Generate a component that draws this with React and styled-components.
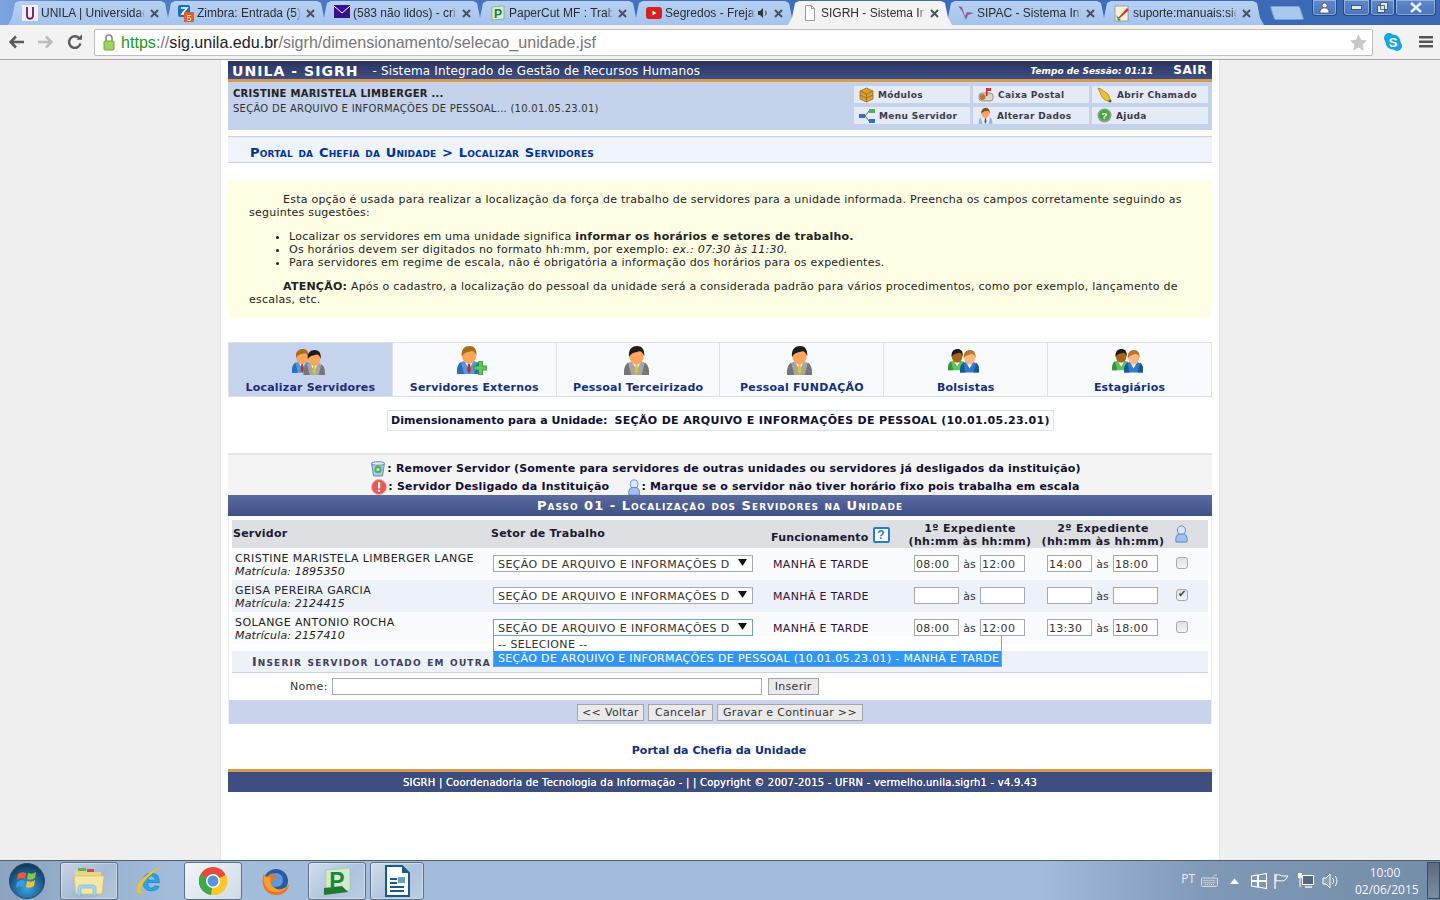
import React from "react";
import styled, { createGlobalStyle } from "styled-components";

const Global = createGlobalStyle`
  html, body { margin: 0; padding: 0; height: 100%; overflow: hidden; background: #f0f0f0; }
  #root { height: 100%; }
  * { box-sizing: border-box; }
`;

const VERDANA = `"DejaVu Sans", Verdana, sans-serif`;
const ARIAL = `"Liberation Sans", Arial, sans-serif`;
const SEGOE = `"Open Sans", "Noto Sans", sans-serif`;

const Screen = styled.div`
  width: 1440px; height: 900px; display: flex; flex-direction: column; overflow: hidden;
  font-family: ${VERDANA}; position: relative;
`;

/* ---------- browser chrome ---------- */
const TabStrip = styled.div`
  height: 25px; flex: none; display: flex; align-items: flex-end; padding-left: 8px;
  background: linear-gradient(90deg, #7fa6df 0, #4f7cc4 5%, #3f6db9 60%, #3a68b4 100%);
  position: relative;
`;
const Tab = styled.div`
  width: 164px; height: 24px; margin-right: -8px; flex: none; display: flex; align-items: center;
  padding: 0 11px 0 14px; gap: 2px;
  clip-path: polygon(0 100%, 4px 70%, 7px 8%, 11px 0, 153px 0, 157px 8%, 160px 70%, 164px 100%);
  background: ${p => (p.$active ? "#f3f3f3" : "linear-gradient(#b6d0f3, #a4c4ee)")};
  z-index: ${p => (p.$active ? 2 : 1)};
`;
const TabIcon = styled.span`
  width: 16px; height: 16px; flex: none; display: flex; margin-right: 1px;
`;
const TabTitle = styled.span`
  flex: 1; min-width: 0; white-space: nowrap; overflow: hidden; font: 12px ${ARIAL}; color: #2c2c2c;
  -webkit-mask-image: linear-gradient(90deg, #000 94%, transparent 100%);
  mask-image: linear-gradient(90deg, #000 94%, transparent 100%);
`;
const TabClose = styled.span`
  flex: none; width: 14px; display: flex; justify-content: center;
`;
const NewTab = styled.div`
  width: 30px; height: 14px; margin: 0 0 5px 16px; background: #a9c8ef; border-radius: 2px;
  transform: skewX(18deg); border: 1px solid #7aa0d8; flex: none;
`;
const WindowButtons = styled.div`
  position: absolute; top: 0; right: 4px; height: 16px; display: flex; gap: 0;
`;
const WindowButton = styled.div`
  width: ${p => p.$w}px; margin-left: ${p => p.$gap || 0}px; height: 16px; border: 1px solid #1f4a8c; border-top: none;
  border-radius: 0 0 4px 4px; background: linear-gradient(#5f88c9, #4a76bb);
  display: flex; align-items: center; justify-content: center;
  box-shadow: inset 0 0 0 1px rgba(255,255,255,.35);
`;
const Toolbar = styled.div`
  height: 35px; flex: none; display: flex; align-items: center; background: #f2f2f2;
  border-bottom: 1px solid #a8a8a8; padding: 0 6px 0 9px; position: relative; z-index: 3;
`;
const NavIcons = styled.div`
  width: 85px; display: flex; gap: 14px; align-items: center; flex: none;
`;
const Omnibox = styled.div`
  width: 1279px; height: 27px; background: #fff; border: 1px solid #bdbdbd; border-radius: 2px; flex: none;
  display: flex; align-items: center; padding: 0 5px 0 8px; font: 16.1px ${ARIAL}; white-space: nowrap;
`;
const Url = styled.span`
  flex: 1; margin-left: 6px; color: #777;
  b { font-weight: normal; color: #1a9a1a; } i { font-style: normal; color: #222; }
`;
const ToolbarEnd = styled.div`
  display: flex; align-items: center; gap: 17px; margin-left: 11px;
`;

/* ---------- page ---------- */
const Viewport = styled.div`
  flex: 1; min-height: 0; background: #efefef; display: flex; justify-content: center; overflow: hidden;
`;
const Sheet = styled.div`
  width: 1000px; background: #fff; padding: 1px 7px 0; border-left: 1px solid #e4e4e4; border-right: 1px solid #e4e4e4;
  color: #222; font-size: 11px;
`;
const TitleBar = styled.div`
  height: 21px; border-bottom: 3px solid #d99a4d; display: flex; align-items: center; padding: 2px 5px 0 4px;
  background: linear-gradient(#29335c, #3f4f85); color: #fff;
`;
const AppName = styled.span`
  font: bold 14px ${VERDANA}; letter-spacing: 1.05px; white-space: nowrap;
`;
const AppLong = styled.span`
  flex: 1; margin-left: 14px; font-size: 12px; letter-spacing: .14px; white-space: nowrap;
`;
const Session = styled.span`
  font: italic bold 9px ${VERDANA}; margin-right: 20px; margin-top: -1px;
`;
const Leave = styled.span`
  font: bold 12px ${VERDANA}; letter-spacing: .5px; margin-top: -2px;
`;
const InfoPanel = styled.div`
  height: 48px; background: #c4d2eb; display: flex; justify-content: space-between; padding: 4px 4px 0 5px;
`;
const UserInfo = styled.div`
  font-size: 10px; line-height: 15px; letter-spacing: .26px; color: #333;
  strong { display: block; color: #222; letter-spacing: .25px; }
`;
const ShortcutGrid = styled.div`
  display: grid; grid-template-columns: repeat(3, 116px); grid-auto-rows: 17px; gap: 4px 3px; width: 354px;
`;
const Shortcut = styled.div`
  background: #e4eaf6; display: flex; align-items: center; gap: 4px; padding-left: 5px;
  font: bold 9px ${VERDANA}; color: #3b3b48; letter-spacing: .33px; white-space: nowrap;
`;
const Breadcrumb = styled.div`
  height: 27px; margin-top: 6px; background: #eff3fc; border-top: 1px solid #c4d2eb; border-bottom: 1px solid #c4d2eb;
  box-shadow: inset 0 1px 0 #f3efe0;
  padding: 8px 0 0 22px; font: bold 13px/15px ${VERDANA}; font-variant: small-caps; color: #003395; white-space: nowrap;
  word-spacing: 1px; letter-spacing: .16px;
`;
const Help = styled.div`
  margin-top: 17px; height: 138px; background: #ffffe5; padding: 13px 25px 0 21px; line-height: 13px; color: #222;
  letter-spacing: .24px;
  p { margin: 0; text-indent: 34px; }
  ul { margin: 11px 0 11px; padding-left: 40px; }
`;
const TabRow = styled.div`
  margin-top: 24px; height: 55px; display: grid; grid-template-columns: repeat(6, 1fr);
  border: 1px solid #dfe1e8; border-width: 1px 1px 1px 0;
`;
const PortalTab = styled.div`
  display: flex; flex-direction: column; align-items: center; padding-top: 3px;
  background: ${p => (p.$active ? "#c6d3ec" : "#f9fafd")}; border-left: 1px solid #dfe1e8;
  font-weight: bold; font-size: 11px; letter-spacing: .2px; color: ${p => (p.$active ? "#1d2a78" : "#12307e")};
`;
const PortalIcon = styled.div`
  height: 29px; margin-bottom: 6px; padding-right: 4px; display: flex; align-items: center; justify-content: center;
`;
const UnitRow = styled.div`
  display: flex; justify-content: center; margin-top: 13px;
`;
const UnitBox = styled.div`
  height: 21px; width: 667px; margin-left: 1px; border: 1px solid #e0e2e8; background: #fbfcfe; padding: 3px 0 0 3px;
  font-weight: bold; font-size: 11px; letter-spacing: .05px; color: #101030; white-space: nowrap;
  span { margin-left: 3px; letter-spacing: .34px; }
`;
const Legend = styled.div`
  margin-top: 22px; height: 42px; border-top: 2px solid #e6e6e6; background: #f4f4f4;
  display: flex; flex-direction: column; align-items: center; padding: 5px 0 0 11px;
  font-weight: bold; font-size: 11px; letter-spacing: .17px; color: #101030; line-height: 18px; overflow: hidden;
`;
const LegendLine = styled.div`
  display: flex; align-items: center; white-space: nowrap; height: 18px; flex: none;
  svg { flex: none; margin-right: 1px; }
  em { font-style: normal; margin-left: 19px; display: inline-flex; align-items: center; }
`;
const SectionBar = styled.div`
  height: 21px; background: linear-gradient(#5a6b9f, #3f4f88); color: #fff; text-align: center;
  font: bold 13px/21px ${VERDANA}; font-variant: small-caps; letter-spacing: 1px; white-space: nowrap;
`;
const Form = styled.div`
  padding: 4px 3px 0; position: relative;
  border-left: 1px solid #eee; border-right: 1px solid #eee;
`;
const GRID = "259px 280px 137px 133px 133px 34px";
const HeadRow = styled.div`
  display: grid; grid-template-columns: ${GRID}; height: 28px; background: #dedfe3;
  font-weight: bold; font-size: 11px; letter-spacing: .22px; color: #1a1a30;
`;
const HeadCell = styled.div`
  display: flex; align-items: flex-end; padding: 0 0 8px ${p => (p.$flush ? 0 : 1)}px; white-space: nowrap;
`;
const FuncCell = styled(HeadCell)`
  padding-bottom: 4px; letter-spacing: .17px;
`;
const StackCell = styled.div`
  display: flex; flex-direction: column; align-items: center; text-align: center; line-height: 13px;
  padding: 2px 9px 0 0; letter-spacing: .32px; white-space: nowrap;
`;
const IconCell = styled.div`
  display: flex; align-items: center; padding: 0 0 0 1px;
`;
const HelpMark = styled.span`
  width: 17px; height: 16px; margin: 0 0 1px 4px; border: 2px solid #1f7fd0; border-radius: 2px; background: #fff;
  color: #1f7fd0; font: bold 12px/13px ${ARIAL}; text-align: center; align-self: flex-end; letter-spacing: 0;
`;
const Row = styled.div`
  display: grid; grid-template-columns: ${GRID}; height: 32px; background: ${p => (p.$alt ? "#edf1f8" : "#fafbfd")};
  align-items: start;
`;
const NameCell = styled.div`
  padding: 4px 0 0 3px; line-height: 13px; font-size: 11px; letter-spacing: .4px; color: #222;
  white-space: nowrap; i { display: block; letter-spacing: .15px; }
`;
const SelectCell = styled.div`
  padding: 7px 0 0 2px;
`;
const FakeSelect = styled.div`
  width: 260px; height: 17px; border: 1px solid ${p => (p.$focus ? "#6e9fe0" : "#a9a9a9")}; background: #fff; display: flex;
  align-items: center; justify-content: space-between; padding: 1px 5px 0 4px; font-size: 11px; letter-spacing: .42px; white-space: nowrap;
  overflow: hidden; color: #333;
  span { overflow: hidden; }
  svg { flex: none; margin: -3px 0 0 7px; }
`;
const Shift = styled.div`
  padding: 10px 0 0 2px; font-size: 11px; letter-spacing: .34px; color: #331133; white-space: nowrap;
`;
const TimeCell = styled.div`
  display: flex; align-items: center; padding: 7px 0 0 6px; font-size: 11px; color: #333;
  span { width: 21px; text-align: center; padding-top: 1px; }
`;
const TimeInput = styled.input`
  width: 45px; height: 17px; border: 1px solid #a9a9a9; background: #fff; padding: 1px 1px 0; font: 11px ${VERDANA};
  letter-spacing: .3px; color: #333; outline: none;
`;
const CheckCell = styled.div`
  display: flex; padding: 9px 0 0 2px;
`;
const Check = styled.input`
  appearance: none; margin: 0; width: 12px; height: 12px; border: 1px solid #a9a9a9; border-radius: 3px;
  background: linear-gradient(#e2e2e2, #f4f4f4); position: relative;
  &:checked::after { content: "✔"; position: absolute; left: 1px; top: -2px; font: 10px ${VERDANA}; color: #444; }
`;
const Dropdown = styled.div`
  position: absolute; left: 264px; top: 120px; width: 509px; border: 1px solid #6e9fe0; border-top: none; background: #fff;
  z-index: 5; font-size: 11px; letter-spacing: .33px; line-height: 14px; color: #333; white-space: nowrap; overflow: hidden;
`;
const Option = styled.div`
  height: 15px; padding: ${p => (p.$sel ? 1 : 2)}px 0 0 4px;
  background: ${p => (p.$sel ? "#3097f8" : "#fff")}; color: ${p => (p.$sel ? "#fff" : "#333")};
`;
const SubTitle = styled.div`
  margin-top: 7px; height: 22px; background: #edf1f8; border-bottom: 1px solid #c4d2eb;
  padding: 4px 0 0 20px; font: bold 12.5px/14px ${VERDANA}; font-variant: small-caps; color: #40405a; letter-spacing: 1.15px; white-space: nowrap;
`;
const NameRow = styled.div`
  height: 27px; display: flex; align-items: center; padding: 0 0 1px 58px; font-size: 11px; letter-spacing: .3px; color: #333;
`;
const NameInput = styled.input`
  width: 430px; height: 17px; margin: 0 6px 0 4px; border: 1px solid #a9a9a9; background: #fff; outline: none;
`;
const GreyButton = styled.div`
  display: inline-flex; align-items: center; height: 17px; padding: 0 ${p => p.$pad || 6}px; border: 1px solid #a5a5a5; background: #eaeaea;
  font-size: 11px; letter-spacing: .32px; color: #333; white-space: nowrap;
`;
const FormFooter = styled.div`
  height: 24px; margin: 0 -3px; background: #c8d4eb; display: flex; justify-content: center; align-items: center; gap: 4px;
`;
const ReturnLink = styled.div`
  margin-top: 20px; text-align: center; font-weight: bold; font-size: 11px; letter-spacing: .02px; color: #12307e; height: 25px; margin-left: -2px;
`;
const PageFoot = styled.div`
  height: 23px; border-top: 3px solid #d99a4d; background: #3d4d80; color: #fff; text-align: center;
  font-size: 10px; line-height: 22px; white-space: nowrap; letter-spacing: .22px; text-shadow: 0 0 .6px #fff;
`;

/* ---------- taskbar ---------- */
const Taskbar = styled.div`
  height: 40px; flex: none; position: relative; display: flex; align-items: center; padding-left: 5px;
  border-top: 1px solid #4e5d70;
  background: linear-gradient(90deg, #8ba3bf 0, #a3bcd9 12%, #a3bcd9 72%, #7f98b5 84%, #748da9 100%);
`;
const TaskItem = styled.div`
  width: ${p => p.$w}px; height: 38px; margin-left: ${p => p.$m || 0}px; flex: none; display: flex; align-items: center; justify-content: center;
  ${p => p.$open && `border: 1px solid #5f7185; border-radius: 3px; background: linear-gradient(135deg, rgba(255,255,255,.5), rgba(255,255,255,.12) 55%, rgba(255,255,255,.25)); box-shadow: inset 0 0 0 1px rgba(255,255,255,.35);`}
  ${p => p.$active && `background: linear-gradient(135deg, #f2f5f9, #cfdbe8); border: 1px solid #5f7185; border-radius: 3px;`}
`;
const Tray = styled.div`
  position: absolute; right: 0; top: 0; bottom: 0; display: flex; align-items: center; color: #fff;
`;
const TrayLang = styled.span`
  font: 12px ${SEGOE}; margin-right: 6px; margin-top: -5px; color: #e8eef5;
`;
const TrayIcons = styled.div`
  display: flex; align-items: center; gap: 7px; margin-right: 16px;
`;
const TraySpaced = styled.span`
  display: flex; margin: 0 5px;
`;
const Clock = styled.div`
  width: 60px; text-align: center; font: 12px/17px ${SEGOE}; color: #f4f7fa; margin-right: 12px; margin-top: 1px;
`;
const ShowDesktop = styled.div`
  width: 13px; height: 37px; background: linear-gradient(#5a6b7f, #7b8da3); border: 1px solid #3b4a5c;
`;

/* ---------- drawings ---------- */
const Head = ({ x = 0, y = 0, s = 1, suit, dark, shirt = "#fff", tie, hair, skin = "#ffa45c" }) => (
  <g transform={`translate(${x} ${y}) scale(${s})`}>
    <path d="M0 28c-.5-7 2-11.500 7-13h10c5 1.500 7.500 6 7 13z" fill={suit} />
    <path d="M0 28c-.5-6 1-10 4-12l3 12z" fill={dark} />
    <path d="M24 28c.5-6-1-10-4-12l-3 12z" fill={dark} />
    <path d="M8 16l4 7 4-7z" fill={shirt} />
    {tie && <path d="M11 17.500h2l.8 7-1.800 3.500-1.800-3.500z" fill={tie} />}
    <ellipse cx="12" cy="9.500" rx="7" ry="8.500" fill={skin} />
    <path d="M4.800 10.500C3.800 3 8 0 12.500 0s7.500 3 7 10c-1-3-2.500-5-4.500-5-3 1-8 1-10.200 5.500z" fill={hair} />
  </g>
);
const G = { suit: "#a6a6a6", dark: "#767676", hair: "#1c1c1c", tie: "#e6c21e" };
const B = { suit: "#4d9be0", dark: "#2b6fb8", hair: "#a96c17", tie: "#d8232a" };
const Pair = () => (
  <svg width="33" height="29" viewBox="0 0 33 29">
    <Head x={0} y={3} s={0.85} {...B} />
    <Head x={11.500} y={4} s={0.89} {...G} />
  </svg>
);
const Plus = () => (
  <svg width="30" height="29" viewBox="0 0 30 29">
    <Head x={0} y={0} s={1} {...B} />
    <path d="M17 20h4.500v-4.500h4V20H30v4h-4.500v5h-4v-5H17z" fill="#5ec95a" stroke="#2c8a35" strokeWidth=".8" />
  </svg>
);
const Single = () => (
  <svg width="27" height="29" viewBox="0 0 24 28">
    <Head x={0} y={0} s={1} {...G} />
  </svg>
);
const Team = () => (
  <svg width="31" height="25" viewBox="0 0 31 25">
    <Head x={0} y={1} s={0.76} suit="#5ec45a" dark="#35963c" hair="#1c1c1c" skin="#a8641c" />
    <Head x={12} y={2} s={0.8} suit="#2e7cc8" dark="#1d5696" hair="#b47a25" skin="#ffb680" shirt="#eef" />
  </svg>
);
const BlueFigure = ({ h = 17 }) => (
  <svg width={h * 0.72} height={h} viewBox="0 0 14 20">
    <ellipse cx="7" cy="6" rx="4.500" ry="5" fill="#dbe8fb" stroke="#4f7ec8" />
    <path d="M1 19c-1-4 0-8 3-9h6c3 1 4 5 3 9z" fill="#9fc0f0" stroke="#4f7ec8" />
  </svg>
);
const Trash = () => (
  <svg width="16" height="16" viewBox="0 0 16 16">
    <path d="M1.500 2h13l-2 13h-9z" fill="#a8c8e0" stroke="#6a90b0" />
    <ellipse cx="8" cy="2.500" rx="6.500" ry="1.800" fill="#dcebf6" stroke="#6a90b0" />
    <circle cx="8" cy="8.500" r="3.500" fill="#3cb54a" /><circle cx="8" cy="8.500" r="1.500" fill="#e8fbe8" />
  </svg>
);
const Alert = () => (
  <svg width="16" height="16" viewBox="0 0 16 16">
    <circle cx="8" cy="8" r="7.500" fill="#e85a50" stroke="#f0a8a0" />
    <rect x="7" y="3" width="2.200" height="6.500" rx="1" fill="#fff" /><circle cx="8.100" cy="11.800" r="1.300" fill="#fff" />
  </svg>
);
const ArrowDown = () => (
  <svg width="9" height="7" viewBox="0 0 9 7"><path d="M0 0h9L4.500 7z" fill="#111" /></svg>
);
const CloseX = () => (
  <svg width="9" height="9" viewBox="0 0 9 9"><path d="M1 1l7 7M8 1L1 8" stroke="#4a505e" strokeWidth="2" /></svg>
);
const Box3D = () => (
  <svg width="15" height="16" viewBox="0 0 15 16">
    <path d="M1 4l6.500-3L14 4v8l-6.500 3L1 12z" fill="#d9a22e" stroke="#8a6414" strokeWidth=".7" />
    <path d="M1 4l6.500 3L14 4M7.500 7v8M1 8l6.500 3L14 8" fill="none" stroke="#8a6414" strokeWidth=".7" />
  </svg>
);
const Mailbox = () => (
  <svg width="16" height="16" viewBox="0 0 16 16">
    <rect x="1" y="6" width="14" height="8" rx="3" fill="#d8d4c8" stroke="#777" strokeWidth=".7" />
    <circle cx="4.500" cy="10" r="3" fill="#b5793a" />
    <rect x="8" y="1" width="1.500" height="8" fill="#c22" /><path d="M9 1h4v3H9z" fill="#e33" />
  </svg>
);
const Bell = () => (
  <svg width="16" height="16" viewBox="0 0 16 16">
    <path d="M1 1l3 1 7 5 3 7c-3 1-7-1-9-4z" fill="#f0c02a" stroke="#8a6a10" strokeWidth=".6" />
    <circle cx="13" cy="14" r="1.500" fill="#7a5c10" />
  </svg>
);
const Net = () => (
  <svg width="16" height="14" viewBox="0 0 16 14">
    <rect x="0" y="5" width="6" height="4" fill="#3a6fc0" /><rect x="10" y="0" width="6" height="4" fill="#53b04f" /><rect x="10" y="10" width="6" height="4" fill="#3a6fc0" />
    <path d="M6 7l4-5M6 7l4 5" stroke="#567" strokeWidth="1" fill="none" />
  </svg>
);
const MiniPerson = () => (
  <svg width="15" height="16" viewBox="0 0 24 28"><Head x={0} y={0} s={1} suit="#e8eefc" dark="#9fb4dc" hair="#7b4e1c" tie="#3a56b0" /></svg>
);
const Question = () => (
  <svg width="15" height="15" viewBox="0 0 15 15">
    <circle cx="7.500" cy="7.500" r="7" fill="#9a9a9a" /><circle cx="7.500" cy="7" r="5.500" fill="#3fae3a" />
    <text x="7.500" y="10.500" textAnchor="middle" fontSize="9.500" fontWeight="700" fontFamily="Liberation Sans" fill="#fff">?</text>
  </svg>
);

/* favicons */
const FavU = () => (
  <svg width="16" height="16" viewBox="0 0 16 16"><rect width="16" height="16" fill="#f3eef2" />
    <path d="M5 2v8c0 5 6 5 6 0V2" fill="none" stroke="#5a1a6a" strokeWidth="1.800" /></svg>
);
const FavZ = () => (
  <svg width="16" height="17" viewBox="0 0 16 17"><rect width="12" height="12" rx="2" fill="#1673b8" />
    <path d="M3 3h6L4 9h5" fill="none" stroke="#fff" strokeWidth="1.600" />
    <rect x="6" y="7" width="10" height="10" rx="1" fill="#ef5a1a" />
    <text x="11" y="15.500" textAnchor="middle" fontSize="9" fill="#fff" fontFamily="Liberation Sans">5</text></svg>
);
const FavMail = () => (
  <svg width="16" height="14" viewBox="0 0 16 14"><rect width="16" height="13" fill="#3a0f8f" /><path d="M0 1l8 7 8-7" fill="none" stroke="#fff" strokeWidth="1" /></svg>
);
const FavP = () => (
  <svg width="16" height="16" viewBox="0 0 16 16"><path d="M2 2l12-1v13L2 15z" fill="#d8ecd4" stroke="#7aa87a" strokeWidth=".7" />
    <text x="8" y="13" textAnchor="middle" fontSize="12" fontWeight="700" fill="#1f7a30" fontFamily="Liberation Sans">P</text></svg>
);
const FavYT = () => (
  <svg width="16" height="16" viewBox="0 0 16 16"><rect y="2" width="16" height="12" rx="3" fill="#d9201f" /><path d="M6.500 5.500l4 2.500-4 2.500z" fill="#fff" /></svg>
);
const FavPage = () => (
  <svg width="16" height="16" viewBox="0 0 16 16"><path d="M3.500.500h6l3 3v12h-9zM9.500.500v3h3" fill="#fff" stroke="#9a9a9a" /></svg>
);
const FavSipac = () => (
  <svg width="16" height="16" viewBox="0 0 16 16"><path d="M0 1l4 1 3 9 2-4 7 1-6 2-2 5-4-9z" fill="#9a5a90" /></svg>
);
const FavNote = () => (
  <svg width="16" height="17" viewBox="0 0 16 17"><rect x="1" y="1" width="13" height="15" fill="#f4f0dc" stroke="#888" strokeWidth=".7" />
    <path d="M4 13l9-10 2 2-9 8z" fill="#c8402a" /><path d="M2 10l5 5-3 1z" fill="#3aa04a" /></svg>
);
const SpeakerSmall = () => (
  <svg width="12" height="12" viewBox="0 0 12 12"><path d="M1 4h2l3-3v10L3 8H1z" fill="#333" /><path d="M8 3.500c1.500 1.500 1.500 3.500 0 5" stroke="#333" fill="none" /></svg>
);

const Back = () => (
  <svg width="15" height="14" viewBox="0 0 15 14"><path d="M7 1.500L1.500 7 7 12.500M2 7h13" fill="none" stroke="#5a5a5a" strokeWidth="2.600" /></svg>
);
const Forward = () => (
  <svg width="15" height="14" viewBox="0 0 15 14"><path d="M8 1.500L13.500 7 8 12.500M13 7H0" fill="none" stroke="#bcbcbc" strokeWidth="2.600" /></svg>
);
const Reload = () => (
  <svg width="16" height="16" viewBox="0 0 16 16"><path d="M13.500 9.500A5.800 5.800 0 1 1 12 4" fill="none" stroke="#5a5a5a" strokeWidth="2.400" /><path d="M9.500 5.800H15V.300z" fill="#5a5a5a" /></svg>
);
const Lock = () => (
  <svg width="12" height="17" viewBox="0 0 12 17"><path d="M3 7V4a3 3 0 0 1 6 0v3" fill="none" stroke="#888" strokeWidth="1.600" /><rect x="1" y="7" width="10" height="9" rx="1" fill="#9ed35f" stroke="#6da838" /></svg>
);
const Star = () => (
  <svg width="17" height="17" viewBox="0 0 17 17"><path d="M8.500 0l2.600 5.800 6 .7-4.500 4 1.300 6.200-5.400-3.100-5.400 3.100 1.300-6.200L0 6.500l6-.7z" fill="#c8c8c8" /></svg>
);
const Skype = () => (
  <svg width="18" height="18" viewBox="0 0 18 18"><circle cx="5" cy="5" r="5" fill="#12a5e8" /><circle cx="13" cy="13" r="5" fill="#12a5e8" /><circle cx="9" cy="9" r="7.500" fill="#12a5e8" />
    <text x="9" y="13.500" textAnchor="middle" fontSize="13" fontWeight="700" fill="#fff" fontFamily="Liberation Sans">S</text></svg>
);
const Menu = () => (
  <svg width="14" height="12" viewBox="0 0 14 12"><path d="M0 0h14v2.500H0zM0 4.500h14V7H0zM0 9h14v2.500H0z" fill="#555" /></svg>
);

/* taskbar icons */
const Orb = () => (
  <svg width="38" height="38" viewBox="0 0 38 38">
    <defs><radialGradient id="orb" cx=".5" cy=".7" r=".7"><stop offset="0" stopColor="#3aa4e6" /><stop offset="1" stopColor="#0c3558" /></radialGradient></defs>
    <circle cx="19" cy="19" r="17.500" fill="url(#orb)" stroke="#30465e" />
    <path d="M10 12c3-2 5-2 8-1l-1 6c-3-1-5-1-8 1z" fill="#ef5a30" /><path d="M20 11c3 1 5 1 8-1l-1 6c-3 2-5 2-8 1z" fill="#8cc63f" />
    <path d="M9 20c3-2 5-2 8-1l-1 6c-3-1-5-1-8 1z" fill="#2ea3e0" /><path d="M19 19c3 1 5 1 8-1l-1 6c-3 2-5 2-8 1z" fill="#fbc02d" />
  </svg>
);
const Folder = () => (
  <svg width="32" height="32" viewBox="0 0 32 32">
    <path d="M2 5h10l2 2h14v6H2z" fill="#e6d58a" /><rect x="5" y="3" width="8" height="3" fill="#5ab552" /><rect x="14" y="4" width="7" height="3" fill="#d9483a" />
    <path d="M1 11h30l-2 18H3z" fill="#f7e7a4" stroke="#d0b860" strokeWidth=".6" />
    <path d="M5 31v-8c0-2 1-3 3-3h12c2 0 3 1 3 3v8h-3v-8H8v8z" fill="#a0d8f5" stroke="#6ab0dc" strokeWidth=".6" />
  </svg>
);
const IE = () => (
  <svg width="32" height="32" viewBox="0 0 32 32">
    <text x="16" y="26" textAnchor="middle" fontSize="34" fontWeight="700" fontFamily="Liberation Sans" fill="#27a4e8" stroke="#1a7ec0" strokeWidth=".5">e</text>
    <path d="M2 27C0 19 14 4 29 2c-6 1-20 11-24 23 0 2 2 3 6 1-4 3-8 3-9 1z" fill="#f7c31c" />
  </svg>
);
const ChromeIcon = () => (
  <svg width="30" height="30" viewBox="0 0 30 30">
    <circle cx="15" cy="15" r="14" fill="#e84a3c" />
    <path d="M15 15L2.500 8.500A14 14 0 0 0 13 28.900z" fill="#3daa4a" />
    <path d="M15 15L28 9A14 14 0 0 1 13 28.900z" fill="#fbc926" />
    <circle cx="15" cy="15" r="7" fill="#fff" /><circle cx="15" cy="15" r="5.500" fill="#5b93dc" />
  </svg>
);
const Firefox = () => (
  <svg width="30" height="30" viewBox="0 0 30 30">
    <circle cx="16" cy="15" r="12" fill="#2c5a9e" /><circle cx="16" cy="14" r="7" fill="#5e9ad8" />
    <path d="M4 8c-4 10 1 20 11 21 8 1 14-5 14-11-2 4-6 7-11 6-6-1-8-7-5-10 1-1 3-1 4-3-3 0-5-2-4-4-4 1-6 3-7 5z" fill="#e8742a" />
    <path d="M4 10C2 18 8 26 16 26c5 0 9-2 11-6-3 3-7 4-10 3-6-2-8-8-6-11z" fill="#f6a02e" />
  </svg>
);
const PaperCutBig = () => (
  <svg width="30" height="30" viewBox="0 0 30 30">
    <path d="M4 4l24-2v22L4 28z" fill="#d4ebd0" stroke="#9abf9a" strokeWidth=".6" />
    <path d="M2 22l18-2 6 6-24 3z" fill="#1f7a30" />
    <text x="15" y="23" textAnchor="middle" fontSize="23" fontWeight="700" fontFamily="Liberation Sans" fill="#178a38">P</text>
  </svg>
);
const WriterDoc = () => (
  <svg width="28" height="32" viewBox="0 0 28 32">
    <path d="M3 1h16l7 7v23H3z" fill="#fff" stroke="#1a5a8a" strokeWidth="2" /><path d="M19 1v7h7z" fill="#1a5a8a" />
    <path d="M7 14h7M7 18h7M7 22h14M7 26h14" stroke="#1a5a8a" strokeWidth="1.800" /><rect x="15" y="12" width="7" height="6" fill="#6a9cc4" />
  </svg>
);
const Keyboard = () => (
  <svg width="17" height="13" viewBox="0 0 17 13"><path d="M12 3c1-2 2-2 4-2" fill="none" stroke="#c8d2dc" /><rect x=".5" y="4" width="16" height="8.500" rx="1" fill="#8f9fb0" stroke="#d4dbe3" /><path d="M2.500 6.500h12M2.500 8.500h12M4 10.500h9" stroke="#dfe6ec" strokeDasharray="1 1" /></svg>
);
const TrayArrow = () => (
  <svg width="9" height="6" viewBox="0 0 9 6"><path d="M0 6l4.500-5.500L9 6z" fill="#fff" /></svg>
);
const WinFlag = () => (
  <svg width="16" height="16" viewBox="0 0 16 16"><path d="M.5 3l6-1v5.500h-6zM7.500 2l8-1.500v7h-8zM.5 8.500h6V14l-6-1zM7.500 8.500h8V15.500l-8-1.500z" fill="none" stroke="#fff" strokeWidth="1.100" /></svg>
);
const ActionFlag = () => (
  <svg width="16" height="16" viewBox="0 0 16 16"><path d="M1 1v15" stroke="#fff" strokeWidth="1.300" /><path d="M2 2c3-1 5 1 7 1h5l-3 4c-2 2-5 0-9 1z" fill="#7a8fa6" stroke="#fff" /></svg>
);
const Network = () => (
  <svg width="18" height="17" viewBox="0 0 18 17"><rect x="5.500" y="3.500" width="11" height="9" fill="#54677c" stroke="#fff" /><path d="M8 15h7" stroke="#fff" strokeWidth="1.300" /><rect x="1" y="1" width="4" height="5" fill="#fff" /><path d="M3 6v9" stroke="#fff" /></svg>
);
const Volume = () => (
  <svg width="17" height="16" viewBox="0 0 17 16"><path d="M1 5h3l4-4v14l-4-4H1z" fill="#8ea0b4" stroke="#fff" /><path d="M10.500 5c1.500 2 1.500 4 0 6M13 3c2.500 3 2.500 7 0 10" fill="none" stroke="#fff" /></svg>
);

const tabs = [
  { icon: <FavU />, title: "UNILA | Universidade Federal" },
  { icon: <FavZ />, title: "Zimbra: Entrada (5)" },
  { icon: <FavMail />, title: "(583 não lidos) - cristine" },
  { icon: <FavP />, title: "PaperCut MF : Trabalhos" },
  { icon: <FavYT />, title: "Segredos - Frejat", sound: true },
  { icon: <FavPage />, title: "SIGRH - Sistema Integrado", active: true },
  { icon: <FavSipac />, title: "SIPAC - Sistema Integrado" },
  { icon: <FavNote />, title: "suporte:manuais:sigrh" },
];
const shortcuts = [
  [<Box3D />, "Módulos"], [<Mailbox />, "Caixa Postal"], [<Bell />, "Abrir Chamado"],
  [<Net />, "Menu Servidor"], [<MiniPerson />, "Alterar Dados"], [<Question />, "Ajuda"],
];
const portalTabs = [
  [<Pair />, "Localizar Servidores", true], [<Plus />, "Servidores Externos"], [<Single />, "Pessoal Terceirizado"],
  [<Single />, "Pessoal FUNDAÇÃO"], [<Team />, "Bolsistas"], [<Team />, "Estagiários"],
];
const SECTOR = "SEÇÃO DE ARQUIVO E INFORMAÇÕES DE PESSOAL (10.01.05.23.01) - MANHÃ E TARDE";
const people = [
  { name: "CRISTINE MARISTELA LIMBERGER LANGE", id: "1895350", t: ["08:00", "12:00", "14:00", "18:00"] },
  { name: "GEISA PEREIRA GARCIA", id: "2124415", t: ["", "", "", ""], checked: true, alt: true },
  { name: "SOLANGE ANTONIO ROCHA", id: "2157410", t: ["08:00", "12:00", "13:30", "18:00"], focus: true },
];

export default function App() {
  return (
    <Screen>
      <Global />
      <TabStrip>
        {tabs.map(t => (
          <Tab key={t.title} $active={t.active}>
            <TabIcon>{t.icon}</TabIcon>
            <TabTitle>{t.title}</TabTitle>
            {t.sound && <SpeakerSmall />}
            <TabClose><CloseX /></TabClose>
          </Tab>
        ))}
        <NewTab />
        <WindowButtons>
          <WindowButton $w={25}>
            <svg width="11" height="12" viewBox="0 0 11 12"><circle cx="5.500" cy="3.500" r="2.500" fill="#fff" stroke="#234" strokeWidth=".6" /><path d="M1 11c0-4 2-5 4.500-5S10 7 10 11z" fill="#fff" stroke="#234" strokeWidth=".6" /></svg>
          </WindowButton>
          <WindowButton $w={27} $gap={6}>
            <svg width="11" height="5" viewBox="0 0 11 5"><rect x=".5" y=".5" width="10" height="4" fill="#dfe8f5" stroke="#234" strokeWidth=".7" /></svg>
          </WindowButton>
          <WindowButton $w={25}>
            <svg width="11" height="11" viewBox="0 0 11 11"><path d="M3.500.500h7v7h-7zM.5 3.500h7v7h-7z" fill="#dfe8f5" stroke="#234" strokeWidth=".7" /></svg>
          </WindowButton>
          <WindowButton $w={41}>
            <svg width="12" height="11" viewBox="0 0 12 11"><path d="M1 1l10 9M11 1L1 10" stroke="#e8eef8" strokeWidth="2.400" /></svg>
          </WindowButton>
        </WindowButtons>
      </TabStrip>
      <Toolbar>
        <NavIcons>
          <Back /><Forward /><Reload />
        </NavIcons>
        <Omnibox>
          <Lock />
          <Url><b>https</b>://<i>sig.unila.edu.br</i>/sigrh/dimensionamento/selecao_unidade.jsf</Url>
          <Star />
        </Omnibox>
        <ToolbarEnd><Skype /><Menu /></ToolbarEnd>
      </Toolbar>

      <Viewport>
        <Sheet>
          <TitleBar>
            <AppName>UNILA - SIGRH</AppName>
            <AppLong>- Sistema Integrado de Gestão de Recursos Humanos</AppLong>
            <Session>Tempo de Sessão: 01:11</Session>
            <Leave>SAIR</Leave>
          </TitleBar>
          <InfoPanel>
            <UserInfo>
              <strong>CRISTINE MARISTELA LIMBERGER ...</strong>
              SEÇÃO DE ARQUIVO E INFORMAÇÕES DE PESSOAL... (10.01.05.23.01)
            </UserInfo>
            <ShortcutGrid>
              {shortcuts.map(([icon, label]) => (
                <Shortcut key={label}>{icon}{label}</Shortcut>
              ))}
            </ShortcutGrid>
          </InfoPanel>
          <Breadcrumb>Portal da Chefia da Unidade &gt; Localizar Servidores</Breadcrumb>
          <Help>
            <p>Esta opção é usada para realizar a localização da força de trabalho de servidores para a unidade informada. Preencha os campos corretamente seguindo as seguintes sugestões:</p>
            <ul>
              <li>Localizar os servidores em uma unidade significa <b>informar os horários e setores de trabalho.</b></li>
              <li>Os horários devem ser digitados no formato hh:mm, por exemplo: <i>ex.: 07:30 às 11:30.</i></li>
              <li>Para servidores em regime de escala, não é obrigatória a informação dos horários para os expedientes.</li>
            </ul>
            <p><b>ATENÇÃO:</b> Após o cadastro, a localização do pessoal da unidade será a considerada padrão para vários procedimentos, como por exemplo, lançamento de escalas, etc.</p>
          </Help>
          <TabRow>
            {portalTabs.map(([icon, label, active]) => (
              <PortalTab key={label} $active={active}><PortalIcon>{icon}</PortalIcon>{label}</PortalTab>
            ))}
          </TabRow>
          <UnitRow>
            <UnitBox>Dimensionamento para a Unidade: <span>SEÇÃO DE ARQUIVO E INFORMAÇÕES DE PESSOAL (10.01.05.23.01)</span></UnitBox>
          </UnitRow>
          <Legend>
            <LegendLine><Trash />: Remover Servidor (Somente para servidores de outras unidades ou servidores já desligados da instituição)</LegendLine>
            <LegendLine>
              <Alert />: Servidor Desligado da Instituição
              <em><BlueFigure />: Marque se o servidor não tiver horário fixo pois trabalha em escala</em>
            </LegendLine>
          </Legend>
          <SectionBar>Passo 01 - Localização dos Servidores na Unidade</SectionBar>
          <Form>
            <HeadRow>
              <HeadCell>Servidor</HeadCell>
              <HeadCell $flush>Setor de Trabalho</HeadCell>
              <FuncCell $flush>Funcionamento<HelpMark>?</HelpMark></FuncCell>
              <StackCell><span>1º Expediente</span><span>(hh:mm às hh:mm)</span></StackCell>
              <StackCell><span>2º Expediente</span><span>(hh:mm às hh:mm)</span></StackCell>
              <IconCell><BlueFigure h={18} /></IconCell>
            </HeadRow>
            {people.map(p => (
              <Row key={p.id} $alt={p.alt}>
                <NameCell>{p.name}<i>Matrícula: {p.id}</i></NameCell>
                <SelectCell>
                  <FakeSelect $focus={p.focus}><span>SEÇÃO DE ARQUIVO E INFORMAÇÕES D</span><ArrowDown /></FakeSelect>
                </SelectCell>
                <Shift>MANHÃ E TARDE</Shift>
                <TimeCell><TimeInput readOnly value={p.t[0]} /><span>às</span><TimeInput readOnly value={p.t[1]} /></TimeCell>
                <TimeCell><TimeInput readOnly value={p.t[2]} /><span>às</span><TimeInput readOnly value={p.t[3]} /></TimeCell>
                <CheckCell><Check type="checkbox" readOnly checked={!!p.checked} /></CheckCell>
              </Row>
            ))}
            <Dropdown>
              <Option>-- SELECIONE --</Option>
              <Option $sel>{SECTOR}</Option>
            </Dropdown>
            <SubTitle>Inserir servidor lotado em outra unidade</SubTitle>
            <NameRow>Nome:<NameInput readOnly /><GreyButton>Inserir</GreyButton></NameRow>
            <FormFooter>
              <GreyButton $pad={4}>&lt;&lt; Voltar</GreyButton>
              <GreyButton>Cancelar</GreyButton>
              <GreyButton $pad={5}>Gravar e Continuar &gt;&gt;</GreyButton>
            </FormFooter>
          </Form>
          <ReturnLink>Portal da Chefia da Unidade</ReturnLink>
          <PageFoot>SIGRH | Coordenadoria de Tecnologia da Informação - | | Copyright © 2007-2015 - UFRN - vermelho.unila.sigrh1 - v4.9.43</PageFoot>
        </Sheet>
      </Viewport>

      <Taskbar>
        <TaskItem $w={44}><Orb /></TaskItem>
        <TaskItem $w={58} $m={11} $open><Folder /></TaskItem>
        <TaskItem $w={60} $m={3}><IE /></TaskItem>
        <TaskItem $w={58} $m={3} $active><ChromeIcon /></TaskItem>
        <TaskItem $w={60} $m={3}><Firefox /></TaskItem>
        <TaskItem $w={58} $m={3} $open><PaperCutBig /></TaskItem>
        <TaskItem $w={54} $m={4} $open><WriterDoc /></TaskItem>
        <Tray>
          <TrayLang>PT</TrayLang>
          <TrayIcons>
            <Keyboard /><TraySpaced><TrayArrow /></TraySpaced><WinFlag /><ActionFlag /><Network /><Volume />
          </TrayIcons>
          <Clock>10:00<br />02/06/2015</Clock>
          <ShowDesktop />
        </Tray>
      </Taskbar>
    </Screen>
  );
}
